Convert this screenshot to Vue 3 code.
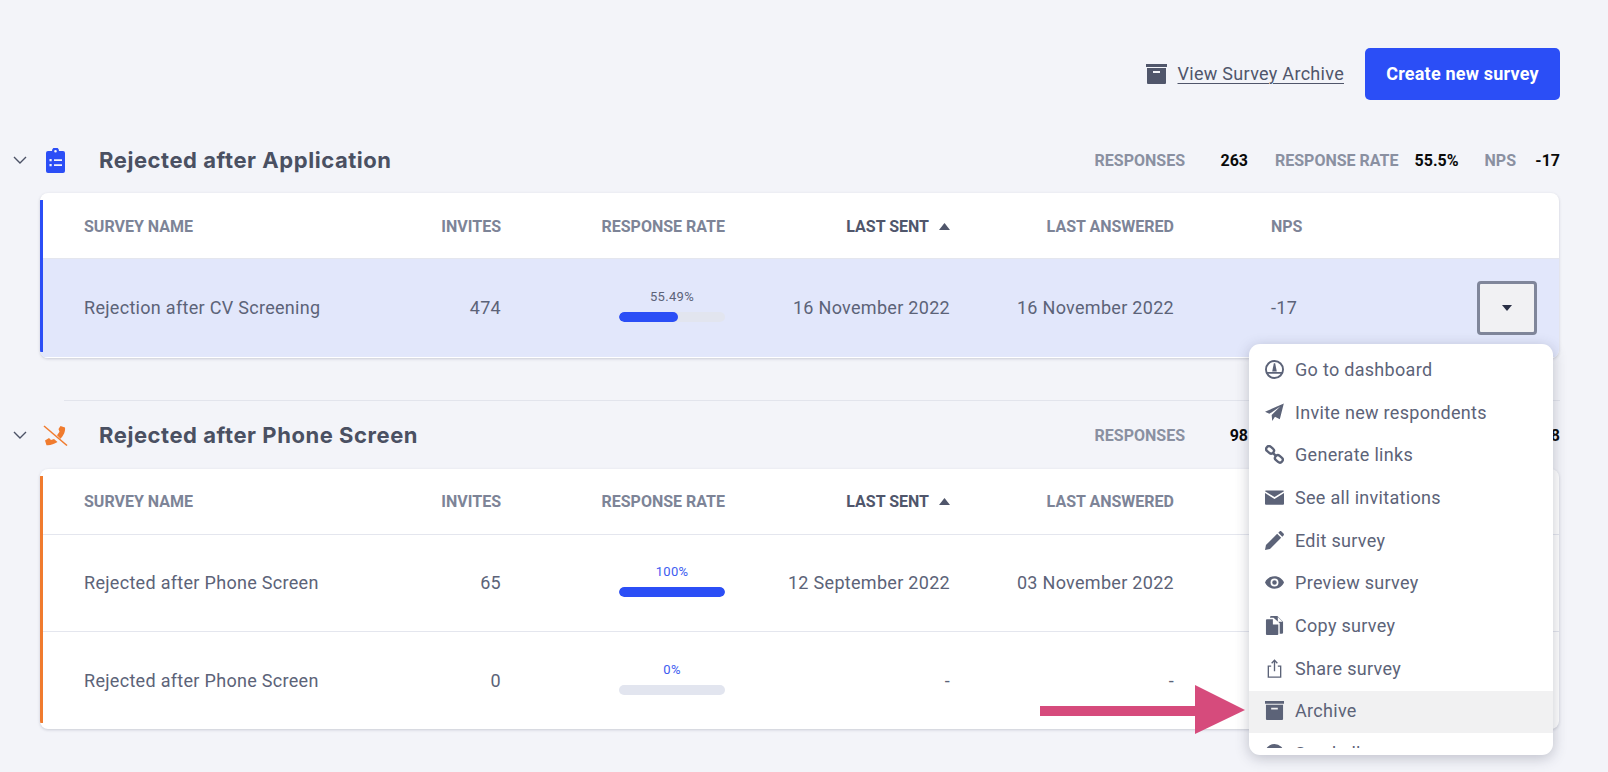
<script setup>
const sections = [
  {
    title: 'Rejected after Application', icon: 'clip', color: '#2b4ef6',
    stats: { responses: '263', rate: '55.5%', nps: '-17' },
    rows: [
      { name: 'Rejection after CV Screening', invites: '474', rate: 55.49, label: '55.49%', sent: '16 November 2022', answered: '16 November 2022', nps: '-17', active: true },
    ],
  },
  {
    title: 'Rejected after Phone Screen', icon: 'phone', color: '#f07b2e',
    stats: { responses: '98', rate: '50.0%', nps: '-8' },
    rows: [
      { name: 'Rejected after Phone Screen', invites: '65', rate: 100, label: '100%', sent: '12 September 2022', answered: '03 November 2022', nps: '-8' },
      { name: 'Rejected after Phone Screen', invites: '0', rate: 0, label: '0%', sent: '-', answered: '-', nps: '-' },
    ],
  },
]
const menu = [
  { label: 'Go to dashboard', icon: 'gauge' },
  { label: 'Invite new respondents', icon: 'plane' },
  { label: 'Generate links', icon: 'link' },
  { label: 'See all invitations', icon: 'mail' },
  { label: 'Edit survey', icon: 'pen' },
  { label: 'Preview survey', icon: 'eye' },
  { label: 'Copy survey', icon: 'copy' },
  { label: 'Share survey', icon: 'share' },
  { label: 'Archive', icon: 'box', hover: true },
  { label: 'Send all', icon: 'dot' },
]
</script>

<template>
  <div class="page">
    <div class="toolbar">
      <a class="archive-link">
        <svg class="archive-icon" viewBox="0 0 21 20"><path d="M0 0h21v3H0zM1 4h19v15a1 1 0 0 1-1 1H2a1 1 0 0 1-1-1zM7 7v2h7V7z" fill-rule="evenodd" /></svg>
        <span>View Survey Archive</span>
      </a>
      <button class="create">Create new survey</button>
    </div>

    <section v-for="(s, i) in sections" :key="s.title" class="section" :class="{ second: i === 1 }">
      <header class="sec-head">
        <svg class="chev" viewBox="0 0 14 8"><path d="M1 1l6 6 6-6" fill="none" stroke="#4c5266" stroke-width="1.4" /></svg>
        <svg v-if="s.icon === 'clip'" class="sec-icon" viewBox="0 0 19 25">
          <path fill="#2b4ef6" fill-rule="evenodd" d="M2 3h4a3.5 3.5 0 0 1 7 0h4a2 2 0 0 1 2 2v18a2 2 0 0 1-2 2H2a2 2 0 0 1-2-2V5a2 2 0 0 1 2-2zM9.500 1.900a1.300 1.300 0 1 0 0 2.600 1.300 1.300 0 0 0 0-2.600zM3.500 11v2.200h2.200V11zM8 11.200v1.800h8v-1.800zM3.500 16v2.200h2.200V16zM8 16.200v1.800h8v-1.800z" />
        </svg>
        <svg v-else class="sec-icon phone" viewBox="0 0 25 21">
          <path fill="#f07b2e" d="M17.500 1l4.500 1.500c.6 4-1.500 8-4.500 11.200L14 10.200l2.500-3.500-1-2.700zM6 13l2 2 3-1 3.500 3c-3.500 2.200-7.500 3.700-11 3.200L2 15.500z" />
          <path stroke="#f07b2e" stroke-width="1.500" d="M1 1l23 19.500" fill="none" />
        </svg>
        <h2 class="sec-title">{{ s.title }}</h2>
        <div class="stats">
          <span class="st-label st-resp">RESPONSES</span>
          <b class="st-val st-v1">{{ s.stats.responses }}</b>
          <span class="st-label st-rate">RESPONSE RATE</span>
          <b class="st-val st-v2">{{ s.stats.rate }}</b>
          <span class="st-label st-nps">NPS</span>
          <b class="st-val st-v3">{{ s.stats.nps }}</b>
        </div>
      </header>

      <div class="card">
        <i class="edge" :style="{ background: s.color }"></i>
        <div class="row head">
          <div>SURVEY NAME</div>
          <div class="r">INVITES</div>
          <div class="r">RESPONSE RATE</div>
          <div class="r sorted">LAST SENT<svg viewBox="0 0 11 7" class="sort"><path d="M5.500 0l5.500 7H0z" /></svg></div>
          <div class="r">LAST ANSWERED</div>
          <div class="nps">NPS</div>
        </div>
        <div v-for="r in s.rows" :key="r.invites" class="row body" :class="{ active: r.active }">
          <div>{{ r.name }}</div>
          <div class="r">{{ r.invites }}</div>
          <div class="rate-cell">
            <div class="rate" :class="{ blue: !r.active }">
              <span class="rate-label">{{ r.label }}</span>
              <span class="track"><span class="fill" :style="{ width: r.rate + '%' }"></span></span>
            </div>
          </div>
          <div class="r">{{ r.sent }}</div>
          <div class="r">{{ r.answered }}</div>
          <div class="nps">{{ r.nps }}</div>
          <div class="act-cell"><button class="act"><i class="caret"></i></button></div>
        </div>
      </div>
    </section>

    <div class="menu">
      <div class="menu-scroll">
        <div v-for="m in menu" :key="m.label" class="item" :class="{ hover: m.hover }">
          <svg class="mi" viewBox="0 0 20 20">
            <g v-if="m.icon === 'gauge'">
              <circle class="strk" cx="10" cy="10" r="9" fill="none" stroke-width="2" />
              <path d="M9.300 3.500h1.400l1.700 8.500H7.600z" />
              <path d="M1.500 12.500h17v2h-17z" />
            </g>
            <path v-else-if="m.icon === 'plane'" d="M19.800.4L15.600 17.200 10.500 14.600 7.600 19 7 12.700 16 3.800 4.600 11.400 0 9.200z" />
            <g v-else-if="m.icon === 'link'" fill="none" stroke-width="2.500" class="strk">
              <rect x="-4.200" y="-3" width="8.800" height="6" rx="3" transform="translate(5.200 5) rotate(40)" />
              <rect x="-4.400" y="-3" width="8.800" height="6" rx="3" transform="translate(14.600 14.600) rotate(40)" />
              <path d="M8 8l4 4" />
            </g>
            <path v-else-if="m.icon === 'mail'" d="M1 2.500h18c.6 0 1 .3 1 .8L10 9.500 0 3.300c0-.5.400-.8 1-.8zM0 5.300l10 6.200 10-6.200V16.500c0 .6-.4 1-1 1H1c-.6 0-1-.4-1-1z" />
            <path v-else-if="m.icon === 'pen'" d="M0 20l1-5.200L12.800 3l4.200 4.200L5.200 19zM14 1.800l1.300-1.300c.6-.6 1.500-.6 2 0l2.200 2.200c.6.600.6 1.400 0 2L18.200 6z" />
            <path v-else-if="m.icon === 'eye'" fill-rule="evenodd" d="M10 3.500c4.600 0 8.400 2.700 10 6.500-1.600 3.800-5.400 6.500-10 6.500S1.600 13.800 0 10c1.600-3.800 5.400-6.500 10-6.500zm0 2.300a4.200 4.200 0 1 0 0 8.400 4.200 4.200 0 0 0 0-8.400zm0 1.800a2.400 2.400 0 1 1 0 4.800 2.400 2.400 0 0 1 0-4.800z" />
            <path v-else-if="m.icon === 'copy'" d="M6.500 0h6.500l6 6v11.500a1.200 1.200 0 0 1-1.200 1.200H15.500V7.500L9 1.800H5.300V1.200A1.200 1.200 0 0 1 6.500 0zM13.500 1v5h5zM2 3.500h6.300v5.500h5.700v10a1 1 0 0 1-1 1H2a1 1 0 0 1-1-1V4.500a1 1 0 0 1 1-1z" />
            <g v-else-if="m.icon === 'share'" class="strk" fill="none" stroke-width="1.400">
              <path d="M6.500 7.500H3.500v11.500h13V7.500h-3" />
              <path d="M10 13V1.500M7 4.500L10 1.400l3 3.100" />
            </g>
            <path v-else-if="m.icon === 'box'" fill-rule="evenodd" d="M0 0h20v3H0zM1 4h18v15a1 1 0 0 1-1 1H2a1 1 0 0 1-1-1zM6.500 7v2h7V7z" />
            <circle v-else cx="10" cy="10" r="10" />
          </svg>
          <span>{{ m.label }}</span>
        </div>
      </div>
    </div>

    <svg class="arrow" viewBox="0 0 205 49"><path d="M0 21h155V0l50 25-50 24V31H0z" fill="#d64b7c" /></svg>
  </div>
</template>

<style>
html, body { margin: 0; background: #f3f4f9; overflow: hidden; }
</style>

<style scoped>
.page {
  position: relative;
  width: 1608px;
  height: 772px;
  padding-top: 48px;
  box-sizing: border-box;
  overflow: hidden;
  background: #f3f4f9;
  font-family: Roboto, sans-serif;
  color: #5c6378;
}
.toolbar {
  display: flex;
  justify-content: flex-end;
  align-items: center;
  gap: 21px;
  padding-right: 48px;
  height: 52px;
}
.archive-link {
  display: flex;
  align-items: center;
  gap: 11px;
  color: #50566b;
  font-size: 18px;
  letter-spacing: 0.3px;
}
.archive-link span { margin-top: -2px; text-decoration: underline; text-underline-offset: 3px; text-decoration-thickness: 1px; }
.archive-icon { width: 21px; height: 20px; fill: #50566b; }
.create {
  width: 195px;
  height: 52px;
  border: 0;
  border-radius: 5px;
  padding: 0 0 2px;
  background: #2b4ef6;
  color: #fff;
  font: 700 18px Roboto, sans-serif;
  letter-spacing: 0.2px;
}
.section { margin-top: 41px; }
.section.second { margin-top: 42px; }
.sec-head {
  display: flex;
  align-items: center;
  height: 38px;
  padding-left: 13px;
  padding-right: 48px;
}
.section.second .sec-head {
  margin-left: 64px;
  margin-right: 48px;
  padding: 2px 0 0;
  border-top: 1px solid #e2e4ec;
  height: 68px;
  box-sizing: border-box;
}
.section.second .chev { margin-left: -51px; }
.chev { width: 14px; height: 8px; flex: none; margin-right: 19px; }
.sec-icon { width: 19px; height: 25px; flex: none; margin-right: 34px; }
.sec-icon.phone { width: 25px; height: 21px; margin-left: -3px; margin-right: 31px; }
.sec-title {
  margin: 0;
  font: 700 22px Inter, sans-serif;
  color: #4a5062;
  letter-spacing: 0.55px;
}
.stats { margin-left: auto; display: flex; align-items: center; font-size: 16px; }
.st-label { font-weight: 700; color: #8a90a1; }
.st-val { color: #0a0a0a; font-weight: 700; text-align: right; }
.st-v1 { width: 63px; }
.st-rate { margin-left: 27px; }
.st-v2 { width: 60px; }
.st-nps { margin-left: 26px; }
.st-v3 { width: 44px; }
.card {
  position: relative;
  margin-left: 40px;
  width: 1519px;
  margin-top: 14px;
  background: #fff;
  border-radius: 8px;
  box-shadow: 0 1px 3px rgba(60, 66, 90, 0.22);
  overflow: hidden;
}
.section.second .card { margin-top: 1px; }
.edge { position: absolute; left: 0; top: 7px; bottom: 6px; width: 3px; z-index: 1; }
.row {
  display: grid;
  grid-template-columns: 317px 100px 224px 225px 224px 304px 1fr;
  padding-left: 44px;
  align-items: center;
}
.head {
  height: 66px;
  padding-top: 1px;
  box-sizing: border-box;
  font-size: 16px;
  font-weight: 700;
  color: #7d8497;
  border-bottom: 1px solid #e4e6ee;
}
.body {
  height: 97px;
  box-sizing: border-box;
  font-size: 18px;
  letter-spacing: 0.3px;
  color: #5c6378;
  border-bottom: 1px solid #e4e6ee;
}
.body:last-child { border-bottom: 0; }
.body.active { background: #e2e7fb; height: 98.500px; border-bottom: 1px solid #fff; }
.r { text-align: right; }
.sorted { color: #50566b; display: flex; justify-content: flex-end; align-items: center; gap: 10px; }
.sort { width: 11px; height: 7px; fill: #50566b; }
.nps { padding-left: 97px; }
.rate-cell { display: flex; justify-content: flex-end; }
.rate { width: 106px; display: flex; flex-direction: column; align-items: center; gap: 8px; margin-top: -3px; }
.rate-label { font-size: 13px; letter-spacing: 0.3px; line-height: 14px; color: #5c6378; }
.rate.blue .rate-label { color: #3d5cf0; }
.track { display: block; width: 100%; height: 10px; border-radius: 5px; background: #e2e5ef; overflow: hidden; }
.fill { display: block; height: 100%; background: #2b4ef6; border-radius: 5px; }
.act-cell { display: flex; }
.act {
  width: 60px;
  height: 54px;
  margin-left: -1px;
  background: #f1f1f3;
  border: 3px solid #80869a;
  border-radius: 4px;
  padding: 0;
  display: flex;
  align-items: center;
  justify-content: center;
}
.caret { border: 5.500px solid transparent; border-top: 6px solid #2a2f45; border-bottom: 0; }
.menu {
  position: absolute;
  left: 1249px;
  top: 344px;
  width: 304px;
  height: 411px;
  background: #fff;
  border-radius: 11px;
  box-shadow: 0 3px 14px rgba(50, 55, 80, 0.28);
  padding: 5px 0 7px;
  box-sizing: border-box;
  overflow: hidden;
  z-index: 3;
}
.menu-scroll { height: 100%; overflow: hidden; }
.item {
  display: flex;
  align-items: center;
  height: 42.700px;
  box-sizing: border-box;
  padding: 0 0 2px 16px;
  gap: 11px;
  font-size: 18px;
  letter-spacing: 0.3px;
  color: #5c6378;
}
.item.hover { background: #f1f1f2; }
.mi { width: 19px; height: 19px; flex: none; fill: #5c6378; }
.strk { stroke: #5c6378; }
.arrow { position: absolute; left: 1040px; top: 685px; width: 205px; height: 49px; z-index: 4; }
</style>
